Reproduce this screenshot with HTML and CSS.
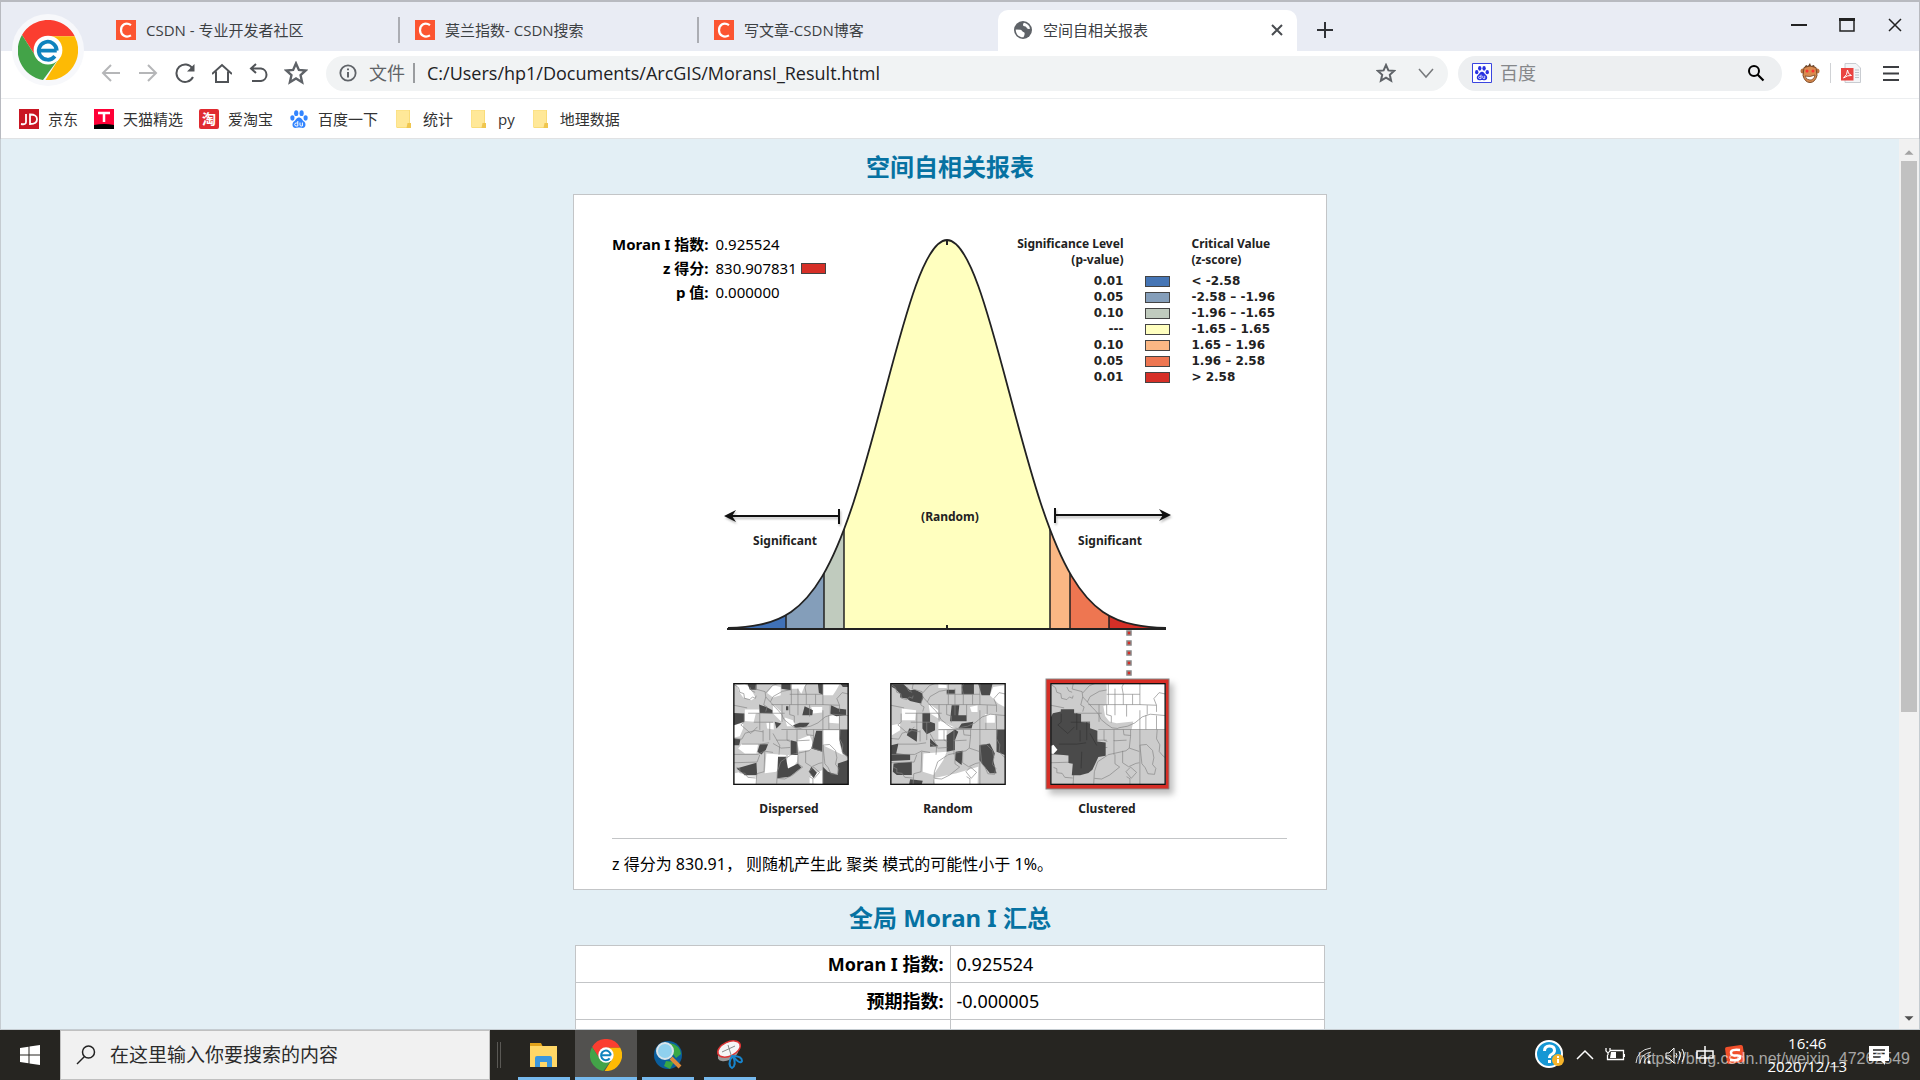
FILE: index.html
```html
<!doctype html>
<html lang="zh-CN">
  <head>
    <meta charset="UTF-8" />
    <meta name="viewport" content="width=device-width, initial-scale=1.0" />
    <title>空间自相关报表</title>
    <link rel="stylesheet" href="styles.css">
  </head>

  <body>
    <!-- shared icons -->
    <svg class="defs" width="0" height="0" aria-hidden="true">
      <symbol id="logo" viewBox="0 0 48 48">
        <path fill="#fb3e30" d="M24 13H45.4A24 24 0 0 0 3.2 12L14.5 29.5A11 11 0 0 1 24 13z"/>
        <path fill="#fdba05" d="M45.4 13H24A11 11 0 0 1 33.5 29.5L22 48A24 24 0 0 0 45.4 13z"/>
        <path fill="#43a348" d="M3.2 12L14.5 29.5A11 11 0 0 0 33.5 29.5L20 48A24 24 0 0 1 3.2 12z"/>
        <circle cx="24" cy="24" r="11.5" fill="#fff"/>
        <path fill="none" stroke="#0f83bd" stroke-width="3" d="M17 24.500H31M31 24.500A7.200 7.200 0 1 0 29.500 29"/>
      </symbol>
      <symbol id="csdn" viewBox="0 0 20 20">
        <rect width="20" height="20" fill="#fc5531"/>
        <path fill="none" stroke="#fff" stroke-width="2.200" d="M15 5.200C10 1.700 5 4.700 5 10.200C5 15.500 10 18.200 15 15.400"/>
      </symbol>
      <symbol id="star" viewBox="0 0 20 20">
        <path fill="none" stroke="#5f6368" stroke-width="2" d="M10 2l2.400 5.400 5.600.5-4.200 3.900 1.300 5.900L10 14.600l-5.100 3.100 1.300-5.900L2 7.900l5.600-.5z"/>
      </symbol>
      <symbol id="paw" viewBox="0 0 20 20">
        <ellipse cx="3.400" cy="9" rx="2.100" ry="2.700"/>
        <ellipse cx="7.200" cy="4.200" rx="2.100" ry="2.900"/>
        <ellipse cx="12.600" cy="4.200" rx="2.100" ry="2.900"/>
        <ellipse cx="16.600" cy="9" rx="2.100" ry="2.700"/>
        <path d="M10 8.500c-2.500 0-3 2.500-5 4-2.500 2-1.800 6.300 1.400 6.500 1.600 0 2-.4 3.600-.4s2 .4 3.600.4c3.200-.2 3.900-4.500 1.400-6.500-2-1.500-2.500-4-5-4z"/>
        <path fill="none" stroke="#fff" d="M8.800 12v5H7.200a1.300 1.300 0 0 1 0-3h1.600M11 13.500V16q0 1 1.200 1h1.200v-3.500"/>
      </symbol>
      <symbol id="folder" viewBox="0 0 20 20">
        <path fill="#f9dc79" d="M2 1h14v13.500l1 1V19H3l-1-1z"/>
        <path fill="#ffe898" d="M2.500 1.500h12.500v12.500h-1v4H2.500z"/>
        <path fill="#f0c64e" d="M13.500 14h3.500v5h-4.500z"/>
      </symbol>
      <symbol id="tracts" viewBox="70 68 348 307">
        <g fill="none" stroke="#858585" stroke-width="2">
          <path d="M140 68l-4 18 30 8 2 16 14 15 14 16 10 10 11 13 5 13 18 15 16 11 19 2"/>
          <path d="M72 72l14 10 4 14 12 4 2 14 16 4 8-8 9 4 2-8M120 80l6 12 10 4M168 110l-6 24 10 6-4 14"/>
          <path d="M182 125l8-16 28-16 22-4M168 98l20-22 20-8M185 133H340M240 102h100M340 133l50 2-8-20 16-18 18 4"/>
          <path d="M245 68v65M265 85v80M292 68l-6 12 4 22v31M318 102v31M340 68v66M340 150v225M217 133v52M240 133v30l14 4v20"/>
          <path d="M115 159h110M72 135l40 8M103 160v26l-10 8 30 26 20-20M150 159v50M132 186h58M180 186v54M160 210v34"/>
          <path d="M215 208h201M275 203l28-5 22-10 22-18 24-8 45 4M300 133v36M362 135v28M390 135v20M390 166v42M358 165v43"/>
          <path d="M72 235l24 2 10-18 30-8 24 4M96 252h54l28-4M232 210v30l10 4M262 208v34l38-2M290 208l2 16 20 2M262 240v44M312 208v20l-4 36-10 8-54 12"/>
          <path d="M72 283h72l20-10 26 4M72 308l70-2 8-22M165 275l-2 60-22 6-2 32M190 220l20 36-2 28M190 250l24 14 28-2M200 240h40"/>
          <path d="M243 285l-30 20-10 30-2 36M265 283v28l14 10-30 24-24 12-22-2M288 272v36l18 12 22-10 10-2M298 335l14-14 18 16-16 18z"/>
          <path d="M308 264l30 10M340 255l20-2 18 18 4 22-4 20 10 12-4 18-20-2-8-18-10-12zM392 208l-2 28 10 18-2 20 12 14 6 4"/>
          <path d="M80 322l10 4v12l16 2 8 12 24 2M300 350l10 6v16"/>
        </g>
      </symbol>
    </svg>

    <header class="browser">
      <svg class="browser-logo" viewBox="0 0 72 72" aria-hidden="true">
        <circle cx="36" cy="36" r="36" fill="#f7f8fb"/>
        <use href="#logo" x="6" y="6" width="60" height="60"/>
      </svg>

      <nav class="tabs">
        <div class="tab">
          <svg class="icon"><use href="#csdn"/></svg>
          <button class="tab-title">CSDN - 专业开发者社区</button>
        </div>
        <div class="tab">
          <svg class="icon"><use href="#csdn"/></svg>
          <button class="tab-title">莫兰指数- CSDN搜索</button>
        </div>
        <div class="tab last">
          <svg class="icon"><use href="#csdn"/></svg>
          <button class="tab-title">写文章-CSDN博客</button>
        </div>
        <div class="tab active">
          <svg class="icon" viewBox="0 0 20 20">
            <circle cx="10" cy="10" r="9" fill="#5f6368"/>
            <path fill="#fff" d="M11 2.800c3 .4 5.500 2.800 6 5.600-1.500 1.200-3 .2-3.600-1.200-.8-1.400-3-.6-3.400-2 0-1 .2-1.600 1-2.400z"/>
            <path fill="#fff" d="M2.700 9.500l4.800.3c1.800.4 1.600 1.900 2.800 2.100 1.900.4 1.700 2.600.2 5.300-4.500.5-7.700-3-7.800-7.700z"/>
          </svg>
          <button class="tab-title">空间自相关报表</button>
          <button class="icon-button" aria-label="关闭标签页">
            <svg class="icon" viewBox="0 0 20 20"><path fill="none" stroke="#494c50" stroke-width="2" d="M5 5l10 10M15 5L5 15"/></svg>
          </button>
        </div>
        <button class="icon-button new-tab" aria-label="新标签页">
          <svg class="icon" viewBox="0 0 20 20"><path fill="none" stroke="#303236" stroke-width="2" d="M10 2v16M2 10h16"/></svg>
        </button>
        <div class="window-controls">
          <button class="icon-button" aria-label="最小化"><svg class="icon" viewBox="0 0 20 20"><path stroke="#222" stroke-width="2" d="M2 10h16"/></svg></button>
          <button class="icon-button" aria-label="最大化"><svg class="icon" viewBox="0 0 20 20"><path fill="none" stroke="#222" stroke-width="1.500" d="M3 4h14v12H3z"/><path stroke="#222" stroke-width="3" d="M2 4.500h16"/></svg></button>
          <button class="icon-button" aria-label="关闭"><svg class="icon" viewBox="0 0 20 20"><path stroke="#222" stroke-width="1.500" d="M4 4l12 12M16 4L4 16"/></svg></button>
        </div>
      </nav>

      <div class="toolbar">
        <div class="nav-buttons">
          <button class="icon-button" aria-label="后退"><svg class="icon" viewBox="0 0 20 20"><path fill="none" stroke="#b5b6b8" stroke-width="2" d="M19 10H2M10 2l-8 8 8 8"/></svg></button>
          <button class="icon-button" aria-label="前进"><svg class="icon" viewBox="0 0 20 20"><path fill="none" stroke="#b5b6b8" stroke-width="2" d="M1 10h17M10 2l8 8-8 8"/></svg></button>
          <button class="icon-button" aria-label="刷新"><svg class="icon" viewBox="0 0 20 20"><path fill="none" stroke="#505357" stroke-width="2" d="M17.500 5.500A8.700 8.700 0 1 0 18 14"/><path fill="#505357" d="M19.500 1v7.500H12z"/></svg></button>
          <button class="icon-button" aria-label="主页"><svg class="icon" viewBox="0 0 20 20"><path fill="none" stroke="#505357" stroke-width="2" d="M0 11l10-9 10 9M4 8.500V19h12V8.500"/></svg></button>
          <button class="icon-button" aria-label="撤销"><svg class="icon" viewBox="0 0 20 20"><path fill="none" stroke="#505357" stroke-width="2" d="M7 1L2 5.500 7 10M2 5.500h10a6.300 6.300 0 0 1 0 12.500H3"/></svg></button>
          <button class="icon-button" aria-label="收藏"><svg class="icon large"><use href="#star"/></svg></button>
        </div>
        <div class="pill address">
          <svg class="icon small" viewBox="0 0 20 20"><circle cx="10" cy="10" r="8.500" fill="none" stroke="#5f6368" stroke-width="2"/><path stroke="#5f6368" stroke-width="2.200" d="M10 9v6M10 5v2"/></svg>
          <label class="scheme" for="url">文件</label>
          <input id="url" type="text" value="C:/Users/hp1/Documents/ArcGIS/MoransI_Result.html">
          <button class="icon-button" aria-label="添加书签"><svg class="icon"><use href="#star"/></svg></button>
          <button class="icon-button" aria-label="展开"><svg class="icon" viewBox="0 0 20 20"><path fill="none" stroke="#77797c" stroke-width="1.500" d="M3 6l7 8 7-8"/></svg></button>
        </div>
        <div class="pill engine">
          <svg class="icon" viewBox="0 0 20 20"><path fill="#fff" stroke="#3a45e0" d="M.5.5h19v19H.5z"/><use href="#paw" x="2" y="2" width="16" height="16" fill="#2932e1"/></svg>
          <input type="text" placeholder="百度" aria-label="百度">
          <button class="icon-button" aria-label="搜索"><svg class="icon" viewBox="0 0 20 20"><circle cx="8" cy="8" r="5" fill="none" stroke="#000" stroke-width="2"/><path stroke="#000" stroke-width="2.200" d="M11.500 11.500l6 6"/></svg></button>
        </div>
        <div class="extensions">
          <button class="icon-button" aria-label="扩展">
            <svg class="icon" viewBox="0 0 20 20">
              <path fill="#5a3a22" d="M4 5l2-3 2 1 2-3 1 3 3-1 1 3z"/>
              <circle cx="3" cy="8" r="2.500" fill="#b87340"/><circle cx="17" cy="8" r="2.500" fill="#b87340"/>
              <path fill="#d98b4f" stroke="#7c4a27" d="M4 4.500q6-3 12 0l1 8q-2 7-7 7t-7-7z"/>
              <circle cx="7" cy="8" r="1.500" fill="#f33"/><circle cx="13" cy="8" r="1.500" fill="#f33"/>
              <path fill="#fff" stroke="#7c4a27" stroke-width=".8" d="M5 13q5 1.500 10-1-1 5-5 5t-5-4z"/>
            </svg>
          </button>
          <button class="icon-button pdf" aria-label="PDF">
            <svg class="icon" viewBox="0 0 20 20">
              <path fill="#f4f5f7" stroke="#c9ccd1" d="M4 .5h11l4.500 4.500v14.500H4z"/>
              <path stroke="#bfc2c8" d="M14 7h4M14 9.500h4M14 12h4M14 14.500h4"/>
              <path fill="#ea4340" d="M0 5h12.500v12.500H0z"/>
              <path fill="none" stroke="#fff" d="M2.500 15q4-3 4-8 0 4 4 5.500-4-.5-8 2.500"/>
            </svg>
          </button>
          <button class="icon-button" aria-label="菜单"><svg class="icon" viewBox="0 0 20 20"><path stroke="#3c3e42" stroke-width="2" d="M2 4h16M2 10.500h16M2 17h16"/></svg></button>
        </div>
      </div>

      <nav class="bookmarks">
        <a href="#jd"><svg class="icon" viewBox="0 0 20 20"><rect width="20" height="20" fill="#c91623"/><path fill="none" stroke="#fff" stroke-width="1.800" d="M7 5v8q0 3-5 2M11 5.500v9.500q7 0 7-4.800T11 5.500z"/></svg>京东</a>
        <a href="#tmall"><svg class="icon" viewBox="0 0 20 20"><rect width="20" height="20" fill="#ff0036"/><path d="M0 16q10-2 20 0v4H0z"/><path fill="none" stroke="#fff" stroke-width="2.500" d="M4 4h12M10 4v9"/></svg>天猫精选</a>
        <a href="#taobao"><svg class="icon" viewBox="0 0 20 20"><rect width="20" height="20" rx="2" fill="#e02a30"/><text class="tao" x="3" y="15">淘</text></svg>爱淘宝</a>
        <a href="#baidu"><svg class="icon" fill="#3385ff"><use href="#paw"/></svg>百度一下</a>
        <a href="#stats"><svg class="icon"><use href="#folder"/></svg>统计</a>
        <a href="#py"><svg class="icon"><use href="#folder"/></svg>py</a>
        <a href="#geo"><svg class="icon"><use href="#folder"/></svg>地理数据</a>
      </nav>
    </header>

    <div class="viewport">
      <main class="report">
        <h1>空间自相关报表</h1>

        <section class="card">
          <div class="figure">
            <svg class="chart" viewBox="0 0 675 590" role="img" aria-label="Normal distribution">
              <defs>
                <clipPath id="bell">
                  <path d="M0-389C10.400-389 20.800-371.900 31.200-343.300C41.600-314.700 52-275.200 62.400-235.900C72.800-196.600 83.200-157.900 93.600-126.300C104-94.700 114.400-70.100 124.800-52.600C135.200-35.100 145.600-24.200 156-17.100C166.400-10 176.800-6.500 187.200-4.300C197.600-2.100 208-1.300 218.400-1V0H-218.400V-1C-208-1.300-197.600-2.100-187.200-4.300C-176.800-6.500-166.400-10-156-17.100C-145.600-24.200-135.200-35.100-124.800-52.600C-114.400-70.100-104-94.700-93.600-126.300C-83.200-157.900-72.800-196.600-62.400-235.900C-52-275.200-41.600-314.700-31.200-343.300C-20.800-371.900-10.400-389 0-389z"/>
                </clipPath>
                <filter id="shadow" x="-10%" y="-10%" width="130%" height="130%">
                  <feDropShadow dx="4" dy="5" stdDeviation="3" flood-opacity=".25"/>
                </filter>
              </defs>

              <g transform="translate(335 399)">
                <g clip-path="url(#bell)">
                  <rect x="-220" y="-400" width="59" height="400" fill="#4071b7"/>
                  <rect x="-161" y="-400" width="38" height="400" fill="#849eba"/>
                  <rect x="-123" y="-400" width="20" height="400" fill="#c0cbbe"/>
                  <rect x="-103" y="-400" width="206" height="400" fill="#ffffbf"/>
                  <rect x="103" y="-400" width="20" height="400" fill="#fbb784"/>
                  <rect x="123" y="-400" width="39" height="400" fill="#ee7651"/>
                  <rect x="162" y="-400" width="58" height="400" fill="#d62f27"/>
                  <path stroke="#222" stroke-width="1.500" d="M-161-400V0M-123-400V0M-103-400V0M103-400V0M123-400V0M162-400V0"/>
                </g>
                <path fill="none" stroke="#222" stroke-width="1.800" d="M-219-1C-208-1.300-197.600-2.100-187.200-4.300C-176.800-6.500-166.400-10-156-17.100C-145.600-24.200-135.200-35.100-124.800-52.600C-114.400-70.100-104-94.700-93.600-126.300C-83.200-157.900-72.800-196.600-62.400-235.900C-52-275.200-41.600-314.700-31.200-343.300C-20.800-371.900-10.400-389 0-389C10.400-389 20.800-371.900 31.200-343.300C41.600-314.700 52-275.200 62.400-235.900C72.800-196.600 83.200-157.900 93.600-126.300C104-94.700 114.400-70.100 124.800-52.600C135.200-35.100 145.600-24.200 156-17.100C166.400-10 176.800-6.500 187.200-4.300C197.600-2.100 208-1.300 219-1"/>
                <path stroke="#222" stroke-width="2" d="M-220 0H219M0-4V0M0-389v5"/>
              </g>

              <g class="arrows">
                <path d="M118 286H226M227 279v15"/>
                <path class="tip" d="M112 286l12-6-4 6 4 6z"/>
                <path d="M444 285H553M443 278v15"/>
                <path class="tip" d="M559 285l-12-6 4 6-4 6z"/>
              </g>

              <text x="173" y="315">Significant</text>
              <text x="498" y="315">Significant</text>
              <text x="338" y="291">(Random)</text>

              <g fill="#d62f27" stroke="#888" stroke-width="1.500">
                <path d="M515 401h4v4h-4zM515 411h4v4h-4zM515 421h4v4h-4zM515 431h4v4h-4zM515 441h4v4h-4z"/>
              </g>

              <!-- dispersed -->
              <svg x="121" y="453" width="116" height="102" viewBox="70 68 348 307">
                <rect x="70" y="68" width="348" height="307" fill="#ccc"/>
                <path fill="#fff" d="M80 75l25-3 15 8 17 32-12 8-25-8-12-17zM190 75l23 5v25l-23 7-18-14zM242 70h48l-5 8-10 22-10-15h-20zM340 70l50 2-10 18-10 15h-30zM105 148h43v10l-10 2-6 25-27-3zM190 133l25 22v30l-25-25zM305 140h33v17l-28 3zM358 165l30 3v22l-30-2zM225 172l25 8 8 18h-26zM72 195l28-7v17l-10 23-18 4zM95 252h50l-5 28h-35l-20-15zM340 210h50v40l10 35-60-30zM170 280l60 5-30 50-35 5zM262 240l38-15 10 25-5 20-37 2zM235 285l30-2-3 22-22 30-12-15zM75 340l20-5 10 13 35 2v23H75zM300 350l38-20v43l-38-3zM170 188h22v20l-20-3z"/>
                <path fill="#4a4a4a" d="M113 70h27v18h-20zM215 70h28v20l-28-5zM325 70h15v33l-12-5zM393 70h23v10h-16zM148 133l22 7 18 10v10l-38-2zM285 138l25 12-2 15h-30zM365 135l20 10 25 3v17l-30 3-18-8zM72 158l31 2v25l-31 10zM250 195l20-7h30l-10 12-32 3zM195 185l20 5-15 15zM72 235l20 2-4 18H72zM150 252h25l-7 18-13 13-12-8zM243 240l19 5 3 40h-22zM320 212h18v63l-33-10zM390 208h26v82l-16-10-10-40zM205 290h23l7 35 30-15 10 12-35 28-38 5zM80 325l60-17 2 37h-37zM305 320l17 18-10 17-14-20zM340 320l15 15 30 10v-35l31-10v75h-76zM229 138h7v12h-7z"/>
                <use href="#tracts" x="70" y="68" width="348" height="307"/>
                <rect class="map-frame" x="72" y="70" width="344" height="303"/>
              </svg>

              <!-- random -->
              <svg x="278" y="453" width="116" height="102" viewBox="70 68 348 307">
                <rect x="70" y="68" width="348" height="307" fill="#ccc"/>
                <g transform="translate(-470 0)">
                  <path fill="#fff" d="M685 70l25 5v8h-25zM850 80l35-5v65l-20-10-25-25zM545 195l25-5v20l-25 15zM575 145l43 5-3 30h-40zM655 130l30 20v25l-25-15zM825 162h30v26h-30zM685 180l25 10 30 15-55 3zM685 210h25v28h-25zM640 280l70-5-10 25-30 45-32-10zM670 355l70-15 65-20-2 53H675zM780 140l23-5v20h-18z"/>
                  <path fill="#4a4a4a" d="M543 72h37l20 18 15-2 20 10 5 14-8 18-32-8-10-7-20-3v-12l-15-15-10-5zM710 88h25v12h-25zM755 70h37v32h-37zM805 70h43l-8 35h-25zM725 135h23l-3 30h25v18h-50zM637 158h23v27l15 5v20l-25 12-13-17zM597 205l25 3-2 37-30-20zM543 255l22-5-7 30 42 3v17l-57 3zM550 310l55-5v40h-45l-12-10zM710 225l25-17 10 7-10 25v30l-25 5zM745 205l10-15 35-5-5 20zM860 208h25v77l-25-10zM808 255l32-5 15 30-5 20 10 40h-20l-32-40zM737 275l21-3-3 43-20-15zM660 235l25 23-25 2zM600 358l38 4-3 11h-38z"/>
                </g>
                <use href="#tracts" x="70" y="68" width="348" height="307"/>
                <rect class="map-frame" x="72" y="70" width="344" height="303"/>
              </svg>

              <!-- clustered, the current result -->
              <rect x="434" y="449" width="123" height="110" fill="#d62f27" stroke="#888" filter="url(#shadow)"/>
              <svg x="438" y="453" width="116" height="102" viewBox="70 68 348 307">
                <rect x="70" y="68" width="348" height="307" fill="#ccc"/>
                <path fill="#fff" d="M240 71h175v138H315l5-25-50 5-22-5-13-17-5-30 10-3zM72 259l8-5 12 15-12 13-8-3z"/>
                <use href="#tracts" x="70" y="68" width="348" height="307"/>
                <path fill="#4a4a4a" d="M72 171l6-12 24-5v-7h40v12l21 2v25l27 3v15l22 8v32l25 3v40l-22 4-18 38-12 10-25 7h-25l3-35-13-2v-23l-45-4 12-13-12-15-8 3z"/>
                <path fill="none" stroke="#333" stroke-width="2" d="M103 160v26l-10 8 30 26 20-20M150 159v50M132 186h58M180 186v54M160 210v34M96 252h54l28-4M190 220l20 36M165 275l-2 50"/>
                <rect class="map-frame" x="72" y="70" width="344" height="303"/>
              </svg>

              <text x="177" y="583">Dispersed</text>
              <text x="336" y="583">Random</text>
              <text x="495" y="583">Clustered</text>
            </svg>

            <table class="scores">
              <tr><th>Moran I 指数:</th><td>0.925524</td></tr>
              <tr><th>z 得分:</th><td>830.907831 <span class="swatch high-3"></span></td></tr>
              <tr><th>p 值:</th><td>0.000000</td></tr>
            </table>

            <table class="legend">
              <thead>
                <tr><th>Significance Level<br>(p-value)</th><th></th><th>Critical Value<br>(z-score)</th></tr>
              </thead>
              <tbody>
                <tr><td>0.01</td><td><span class="swatch low-3"></span></td><td>&lt; -2.58</td></tr>
                <tr><td>0.05</td><td><span class="swatch low-2"></span></td><td>-2.58 – -1.96</td></tr>
                <tr><td>0.10</td><td><span class="swatch low-1"></span></td><td>-1.96 – -1.65</td></tr>
                <tr><td>---</td><td><span class="swatch random"></span></td><td>-1.65 – 1.65</td></tr>
                <tr><td>0.10</td><td><span class="swatch high-1"></span></td><td>1.65 – 1.96</td></tr>
                <tr><td>0.05</td><td><span class="swatch high-2"></span></td><td>1.96 – 2.58</td></tr>
                <tr><td>0.01</td><td><span class="swatch high-3"></span></td><td>&gt; 2.58</td></tr>
              </tbody>
            </table>
          </div>
          <p class="conclusion">z 得分为 830.91， 则随机产生此 聚类 模式的可能性小于 1%。</p>
        </section>

        <h2>全局 Moran I 汇总</h2>
        <table class="summary">
          <tr><th>Moran I 指数:</th><td>0.925524</td></tr>
          <tr><th>预期指数:</th><td>-0.000005</td></tr>
          <tr><th></th><td></td></tr>
        </table>
      </main>

      <div class="scrollbar">
        <svg viewBox="0 0 20 20"><path fill="#a3a3a3" d="M5 13l5-5 5 5z"/></svg>
        <div class="track"><div class="thumb"></div></div>
        <svg viewBox="0 0 20 20"><path fill="#505050" d="M5 8l5 5 5-5z"/></svg>
      </div>
    </div>

    <footer class="taskbar">
      <button class="start" aria-label="开始">
        <svg class="icon" viewBox="0 0 20 20"><path fill="#fff" d="M0 3l8.500-1.200v7.700H0zM9.500 1.600L20 0v9.500H9.500zM0 10.500h8.500v7.700L0 17zM9.500 10.500H20V20L9.500 18.400z"/></svg>
      </button>
      <div class="taskbar-search">
        <svg class="icon" viewBox="0 0 20 20"><circle cx="12.500" cy="7" r="6" fill="none" stroke="#222" stroke-width="1.500"/><path stroke="#222" stroke-width="1.500" d="M8.500 11.500L1 19"/></svg>
        <input type="text" placeholder="在这里输入你要搜索的内容" aria-label="搜索">
      </div>
      <div class="grip"></div>
      <div class="apps">
        <button class="app" aria-label="文件资源管理器">
          <svg viewBox="0 0 32 32"><path fill="#e0a21a" d="M2 4h11l2 4H2z"/><path fill="#ffd766" d="M2 7h27v21H2z"/><path fill="#3b97dd" d="M7 28V19q0-2 2-2h13q2 0 2 2v9h-5v-5h-7v5z"/></svg>
        </button>
        <button class="app current" aria-label="浏览器"><svg><use href="#logo"/></svg></button>
        <button class="app" aria-label="ArcMap">
          <svg viewBox="0 0 32 32"><circle cx="16" cy="16" r="14" fill="#0a5e9c"/><path fill="#39a845" d="M18 4q10 2 11 11l-5 4-4-5zM14 22l8 1-4 7-6-3z"/><circle cx="13" cy="12" r="8" fill="#8fd0ee" stroke="#d9e4ea" stroke-width="2"/><path stroke="#e08b3a" stroke-width="4" d="M19 19l9 9"/></svg>
        </button>
        <button class="app" aria-label="截图工具">
          <svg viewBox="0 0 32 32"><ellipse cx="14" cy="15" rx="11" ry="6" transform="rotate(-25 14 15)" fill="#999"/><ellipse cx="15" cy="10" rx="12" ry="7" transform="rotate(-25 15 10)" fill="#f5f5f5" stroke="#d33" stroke-width="1.500"/><path stroke="#888" d="M8 13l13-6M14 6l4 13"/><path fill="none" stroke="#1784cc" stroke-width="2" d="M18 17q-5 9 0 12 5-3 1-12 9 0 9 5-2 4-9-5"/></svg>
        </button>
      </div>
      <div class="tray">
        <svg class="help" viewBox="0 0 30 30"><circle cx="14" cy="14" r="13" fill="#1597d4" stroke="#fff" stroke-width="2"/><path fill="none" stroke="#fff" stroke-width="3" d="M9.500 11q0-5 5-5t5 4.500q0 2.500-3 4-2 1-2 3.500M14.500 20v3"/><circle cx="23" cy="20" r="6" fill="#f5b32a"/><path stroke="#fff" stroke-width="2" d="M23 19v4M23 16v2"/></svg>
        <svg viewBox="0 0 20 20"><path fill="none" stroke="#fff" stroke-width="1.500" d="M2 14l8-8 8 8"/></svg>
        <svg viewBox="0 0 20 20"><path fill="none" stroke="#fff" stroke-width="1.300" d="M5.500 5.500h13v9h-16V10M1 3v3q2 3 4 0V3M3 7v3M19.500 9v3"/><path fill="#fff" d="M6 7h5v6H5z"/></svg>
        <svg viewBox="0 0 20 20"><g fill="none" stroke="#ddd"><path d="M1 18Q2 5 16 3M5 18Q6 9 16 7M9 18q1-6 7-7"/></g><circle cx="14" cy="17" r="1.500" fill="#fff"/></svg>
        <svg viewBox="0 0 20 20"><path fill="none" stroke="#fff" d="M1 8h3l5-5v15l-5-5H1zM11 8q2 3 0 5M14 6q3 4 0 9M17 4q4 6 0 13"/></svg>
        <svg viewBox="0 0 20 20"><path fill="none" stroke="#fff" stroke-width="1.500" d="M2 6h16v7H2zM10 1v18"/></svg>
        <svg viewBox="0 0 20 20"><rect x="1" y="1" width="18" height="17" rx="2" transform="rotate(-8 10 10)" fill="#f1502b"/><path fill="none" stroke="#fff" stroke-width="2.500" d="M15 5Q6 4 6 7.500t5 3 4 2.500-10 2"/></svg>
        <div class="clock"><time>16:46</time><time>2020/12/13</time></div>
        <svg viewBox="0 0 20 20"><path fill="#fff" d="M0 1h20v15h-4v4l-4-4H0z"/><path stroke="#222" stroke-width="1.300" d="M4 5h12M4 8.500h12M4 12h8"/></svg>
      </div>
      <span class="watermark">https://blog.csdn.net/weixin_47262549</span>
    </footer>
  </body>
</html>
```

FILE: styles.css
```css
* {
  box-sizing: border-box;
}

body {
  margin: 0;
  height: 100vh;
  display: flex;
  flex-direction: column;
  overflow: hidden;
  font-family: "Open Sans", "Noto Sans CJK SC", sans-serif;
  font-size: 15px;
  color: #3c4043;
  background: #fff;
}

button {
  padding: 0;
  border: 0;
  background: none;
  font: inherit;
  color: inherit;
}

input {
  flex: 1;
  min-width: 0;
  padding: 0;
  border: 0;
  outline: none;
  background: none;
  font: inherit;
  color: inherit;
}

.defs {
  position: absolute;
}

.icon {
  flex: none;
  display: block;
  width: 20px;
  height: 20px;
}
.icon.small {
  width: 18px;
  height: 18px;
}
.icon.large {
  width: 24px;
  height: 24px;
}

.icon-button {
  flex: none;
  display: flex;
  align-items: center;
  justify-content: center;
}

/* browser window */

.browser {
  position: relative;
  border: 1px solid #b8bac0;
  border-width: 2px 1px 0;
}

.browser-logo {
  position: absolute;
  left: 11px;
  top: 12px;
  width: 72px;
  height: 72px;
}

.tabs {
  display: flex;
  height: 49px;
  padding: 8px 14px 0 100px;
  background: #e9ecf4;
}

.tab {
  position: relative;
  flex: 0 1 299px;
  display: flex;
  align-items: center;
  gap: 10px;
  padding: 0 10px 2px 15px;
}
.tab:not(.active):not(.last)::after {
  content: "";
  position: absolute;
  right: 0;
  top: 7px;
  width: 2px;
  height: 26px;
  background: #abadb3;
}
.tab.active {
  border-radius: 10px 10px 0 0;
  background: #fff;
}
.tab-title {
  flex: 1;
  text-align: left;
  white-space: nowrap;
}

.new-tab {
  margin-left: 18px;
  padding-bottom: 2px;
}

.window-controls {
  display: flex;
  gap: 28px;
  height: 30px;
  margin-left: auto;
}

.toolbar {
  display: flex;
  align-items: center;
  height: 47px;
  padding: 0 18px 3px 98px;
}

.nav-buttons {
  display: flex;
  gap: 13px;
  margin-right: 18px;
}
.nav-buttons .icon-button {
  width: 24px;
  height: 24px;
}

.pill {
  display: flex;
  align-items: center;
  height: 35px;
  border-radius: 18px;
  font-size: 18px;
}
.address {
  flex: 1;
  gap: 12px;
  padding: 0 12px 0 13px;
  background: #f1f3f4;
  color: #202124;
}
.address .icon-button + .icon-button {
  margin-left: 8px;
}
.scheme {
  padding-right: 8px;
  border-right: 2px solid #9a9c9f;
  line-height: 20px;
  color: #606367;
}
.engine {
  width: 324px;
  margin-left: 10px;
  gap: 8px;
  padding: 0 16px 0 14px;
  background: #edeff1;
}
.engine input::placeholder {
  color: #85878a;
}

.extensions {
  display: flex;
  align-items: center;
  gap: 10px;
  margin-left: 18px;
}
.extensions .pdf {
  margin-right: 10px;
  padding-left: 10px;
  border-left: 1px solid #d0d2d5;
}

.bookmarks {
  display: flex;
  align-items: center;
  gap: 16px;
  height: 41px;
  padding-left: 18px;
  border-top: 1px solid #eceef0;
  border-bottom: 1px solid #e0e2e4;
}
.bookmarks a {
  display: flex;
  align-items: center;
  gap: 9px;
  color: #333;
  text-decoration: none;
}
.tao {
  font-size: 14px;
  font-weight: bold;
  fill: #fff;
}

/* report page */

.viewport {
  flex: 1;
  min-height: 0;
  display: flex;
  overflow: hidden;
  border: 1px solid #c5ccd1;
  border-top: 0;
  background: #e3eff5;
}

.report {
  flex: 1;
  color: #000;
  font-family: "Noto Sans", "Noto Sans CJK SC", sans-serif;
}

.report h1,
.report h2 {
  margin: 0;
  color: #0672a2;
  font-size: 24px;
  line-height: 55px;
  text-align: center;
}

.card {
  max-width: 754px;
  margin: 0 auto;
  padding: 35px 39px 0 38px;
  border: 1px solid #c3c5c7;
  background: #fff;
}

/* tables lie over the empty corners of the chart */
.figure {
  display: grid;
}
.figure > * {
  grid-area: 1 / 1;
  align-self: start;
}

.chart {
  display: block;
  width: 100%;
  height: auto;
}
.chart text {
  font-family: "Noto Sans", sans-serif;
  font-size: 12px;
  font-weight: bold;
  text-anchor: middle;
  fill: #222;
}
.chart .arrows {
  fill: none;
  stroke: #111;
  stroke-width: 2;
  filter: drop-shadow(1px 2px 1px #bbb);
}
.chart .tip {
  fill: #111;
  stroke: none;
}
.chart .map-frame {
  fill: none;
  stroke: #111;
  stroke-width: 4;
}

.scores {
  justify-self: start;
  margin-top: 2px;
  border-collapse: collapse;
  font-size: 15px;
}
.scores tr {
  height: 24px;
}
.scores th,
.scores td {
  padding: 0;
  line-height: 24px;
}
.scores th {
  padding-right: 7px;
  text-align: right;
}

.swatch {
  display: inline-block;
  width: 25px;
  height: 11px;
  border: 1px solid #444;
}
.low-3 { background: #4575b5; }
.low-2 { background: #849eba; }
.low-1 { background: #c0cbbe; }
.random { background: #ffffbf; }
.high-1 { background: #fbb784; }
.high-2 { background: #ee7651; }
.high-3 { background: #d62f27; }

.legend {
  justify-self: end;
  margin: 6px 12px 0 0;
  border-collapse: collapse;
  color: #222;
  font-family: "DejaVu Sans", sans-serif;
  font-size: 12px;
  font-weight: bold;
  line-height: 16px;
  white-space: nowrap;
}
.legend th,
.legend td {
  padding: 0;
  text-align: left;
}
.legend th {
  padding-bottom: 5px;
  font-family: "Noto Sans", sans-serif;
}
.legend th:first-child,
.legend td:first-child {
  text-align: right;
}
.legend td:nth-child(2) {
  padding: 0 21px 0 22px;
}
.legend .swatch {
  display: block;
}

.conclusion {
  margin: 18px 0 0;
  padding: 12px 0 12px;
  border-top: 1px solid #c3c5c7;
  font-size: 16px;
  line-height: 26px;
}

.summary {
  width: 100%;
  max-width: 750px;
  margin: 0 auto;
  border-collapse: collapse;
  table-layout: fixed;
  background: #fff;
  font-size: 18px;
}
.summary th,
.summary td {
  height: 37px;
  padding: 0 6px;
  border: 1px solid #c3c5c7;
  line-height: 30px;
}
.summary th {
  text-align: right;
}

.scrollbar {
  display: flex;
  flex-direction: column;
  width: 20px;
  padding: 4px 0 2px;
  background: #f1f1f1;
}
.scrollbar svg {
  width: 20px;
  height: 18px;
}
.track {
  flex: 1;
  padding: 0 2px;
}
.thumb {
  height: 65%;
  background: #c1c1c1;
}

/* taskbar */

.taskbar {
  position: relative;
  display: flex;
  height: 50px;
  background: #262521;
  color: #fff;
}

.start {
  display: flex;
  align-items: center;
  justify-content: center;
  width: 60px;
}

.taskbar-search {
  display: flex;
  align-items: center;
  gap: 14px;
  width: 430px;
  padding: 0 15px;
  border: 1px solid #c0c0c0;
  background: #f1f1f1;
  color: #222;
  font-size: 19px;
}
.taskbar-search input::placeholder {
  color: #2b2b2b;
}

.grip {
  width: 4px;
  margin: 12px 12px 12px 7px;
  border: 1px solid #5a5955;
  border-width: 0 1px;
}

.apps {
  display: flex;
}
.app {
  display: flex;
  align-items: center;
  justify-content: center;
  width: 62px;
  border: 0 solid #262521;
  border-width: 0 5px;
  box-shadow: inset 0 -3px #76b9ed;
}
.app.current {
  border-width: 0;
  background: #52514f;
}
.app svg {
  width: 32px;
  height: 32px;
}

.tray {
  display: flex;
  align-items: center;
  gap: 10px;
  margin-left: auto;
  padding: 0 31px 0 0;
}
.tray svg {
  flex: none;
  width: 20px;
  height: 20px;
}
.tray .help {
  width: 30px;
  height: 30px;
}
.clock {
  display: flex;
  flex-direction: column;
  align-items: center;
  margin: 0 12px;
  line-height: 23px;
}

.watermark {
  position: absolute;
  right: 10px;
  top: 20px;
  color: #ffffff99;
  font-family: "Liberation Sans", sans-serif;
  font-size: 16px;
}
```
